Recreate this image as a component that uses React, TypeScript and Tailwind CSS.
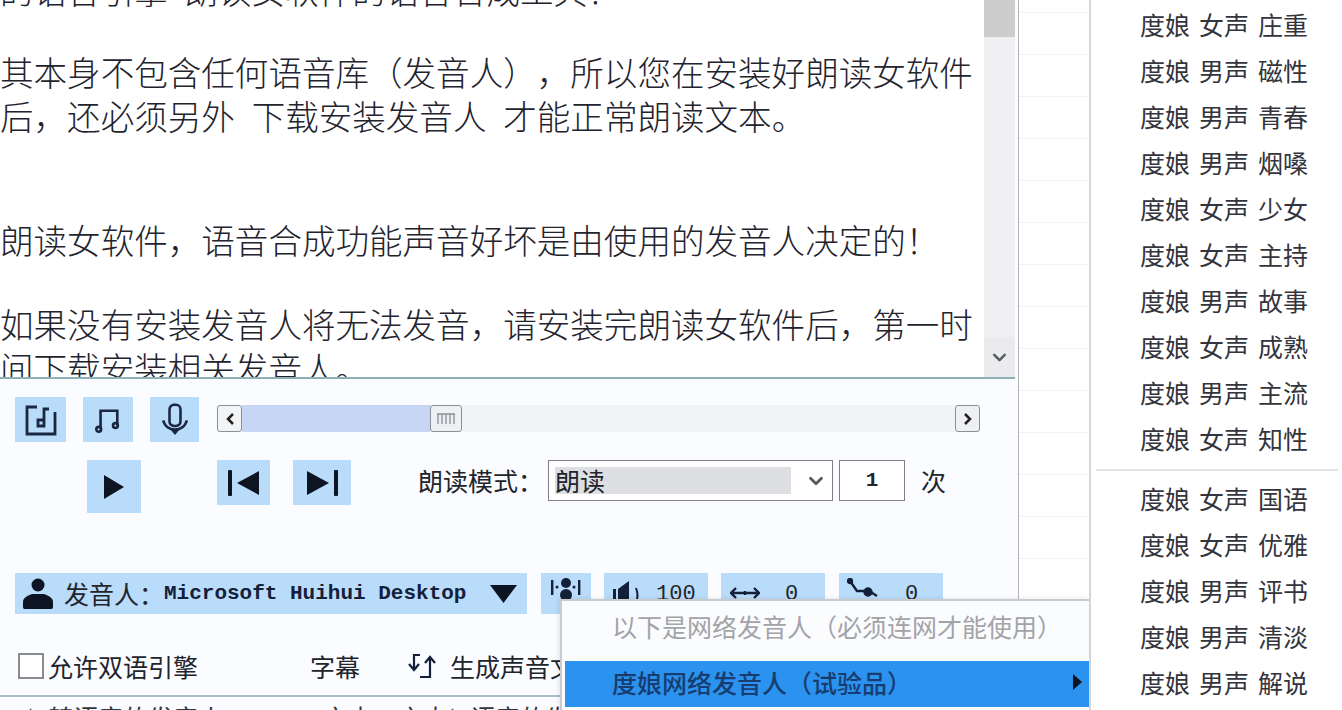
import React from 'react';
import { ChevronDown } from 'lucide-react';

const ink = '#1b2740';

const voices = [
  ['女声', '庄重'],
  ['男声', '磁性'],
  ['男声', '青春'],
  ['男声', '烟嗓'],
  ['女声', '少女'],
  ['女声', '主持'],
  ['男声', '故事'],
  ['女声', '成熟'],
  ['男声', '主流'],
  ['女声', '知性'],
];

const voices2 = [
  ['女声', '国语'],
  ['女声', '优雅'],
  ['男声', '评书'],
  ['男声', '清淡'],
  ['男声', '解说'],
];

const VoiceRow = ({ v }: { v: string[] }) => (
  <div className="h-[46px] flex items-center gap-[9px] pl-[49px] text-[25px] leading-none text-[#34343c]">
    <span>度娘</span>
    <span>{v[0]}</span>
    <span>{v[1]}</span>
  </div>
);

const Line = ({ children, className = '' }: { children: React.ReactNode; className?: string }) => (
  <p className={`h-[44px] leading-[44px] whitespace-pre [text-spacing-trim:space-all] ${className}`}>{children}</p>
);

const App = () => {
  return (
    <div className="relative w-[1342px] h-[710px] overflow-hidden flex bg-white text-[#22242c] font-['Noto_Sans_CJK_SC','Noto_Sans',sans-serif]">
      {/* main window */}
      <div className="w-[1019px] shrink-0 border-r border-[#b2b4b8] flex flex-col bg-[#fafcff]">
        <div className="w-[1015px] h-[379px] shrink-0 flex border-b-2 border-[#8db0b6]">
          <div className="w-[984px] overflow-hidden bg-white text-[33.55px] font-light text-[#23232e]">
            <Line className="-mt-[32px]">的语音引擎{'\u2002'}朗读女软件的语音合成工具！</Line>
            <Line className="mt-[38px]">其本身不包含任何语音库（发音人），所以您在安装好朗读女软件</Line>
            <Line>后，还必须另外{'\u2002'}下载安装发音人{'\u2002'}才能正常朗读文本。</Line>
            <Line className="mt-[80px]">朗读女软件，语音合成功能声音好坏是由使用的发音人决定的！</Line>
            <Line className="mt-[40px]">如果没有安装发音人将无法发音，请安装完朗读女软件后，第一时</Line>
            <Line>间下载安装相关发音人。</Line>
          </div>
          <div className="w-[31px] bg-[#f0f0f2] flex flex-col justify-between">
            <div className="h-[37px] bg-[#cdcdcd]" />
            <div className="h-[40px] flex items-center justify-center bg-[#ebebed] text-[#5a6068]">
              <ChevronDown size={21} strokeWidth={3} />
            </div>
          </div>
        </div>

        {/* row 1 */}
        <div className="mt-[18px] h-[45px] shrink-0 flex pl-[15px]">
          <div className="w-[51px] h-[45px] bg-[#b9dcfa] flex items-center justify-center">
            <svg width="32" height="32" viewBox="0 0 32 32" fill="none" stroke={ink} strokeWidth="2.8">
              <path d="M12 3H2V30H30V8" />
              <path d="M24 5H19V22H13V16H19" />
            </svg>
          </div>
          <div className="ml-[17px] w-[50px] h-[45px] bg-[#b9dcfa] flex items-center justify-center">
            <svg width="26" height="28" viewBox="0 0 28 30" fill="none" stroke={ink} strokeWidth="2.8">
              <path d="M6 25V5H24V21" />
              <circle cx="4" cy="25" r="2.6" />
              <circle cx="22" cy="21" r="2.6" />
            </svg>
          </div>
          <div className="ml-[17px] w-[49px] h-[45px] bg-[#b9dcfa] flex items-center justify-center">
            <svg width="26" height="33" viewBox="0 0 28 36" fill="none" stroke={ink} strokeWidth="2.8">
              <rect x="8" y="2" width="12" height="23" rx="5" />
              <path d="M1 19C3 26 8 29 14 29C20 29 25 26 27 19" />
              <path d="M9 29H19L14 35Z" fill={ink} stroke="none" />
            </svg>
          </div>
          {/* progress slider */}
          <div className="ml-[18px] mt-[8px] w-[763px] h-[27px] flex items-center bg-[#f1f3f6]">
            <div className="w-[25px] h-[27px] bg-[#f3f4f6] border border-[#8b8f96] rounded-[3px] flex items-center justify-center">
              <svg width="8" height="12" viewBox="0 0 8 12"><path d="M7 1 2 6l5 5" fill="none" stroke="#222" strokeWidth="2.5" /></svg>
            </div>
            <div className="w-[188px] h-[27px] bg-[#c8d6f6]" />
            <div className="w-[32px] h-[27px] bg-[#eef0f3] border border-[#8b8f96] rounded-[3px] flex items-center justify-center">
              <svg width="20" height="12" viewBox="0 0 20 12" stroke="#8a8f98" strokeWidth="1.3">
                <path d="M2 1V11M6 1V11M10 1V11M14 1V11M18 1V11M1 1H19" />
              </svg>
            </div>
            <div className="flex-1" />
            <div className="w-[25px] h-[27px] bg-[#eef0f3] border border-[#8b8f96] rounded-[3px] flex items-center justify-center">
              <svg width="8" height="12" viewBox="0 0 8 12"><path d="M1 1l5 5-5 5" fill="none" stroke="#222" strokeWidth="2.5" /></svg>
            </div>
          </div>
        </div>

        {/* row 2 */}
        <div className="mt-[18px] h-[53px] shrink-0 flex items-start pl-[87px]">
          <div className="w-[54px] h-[53px] bg-[#b9dcfa] flex items-center justify-center">
            <svg width="20" height="24" viewBox="0 0 20 24"><path d="M0 0 20 12 0 24Z" fill="#0d1422" /></svg>
          </div>
          <div className="ml-[76px] w-[53px] h-[45px] bg-[#b9dcfa] flex items-center justify-center">
            <svg width="32" height="26" viewBox="0 0 32 26" fill="#0d1422">
              <rect x="0" y="0" width="4" height="26" rx="1" />
              <path d="M31 1V25L9 13Z" />
            </svg>
          </div>
          <div className="ml-[23px] w-[58px] h-[45px] bg-[#b9dcfa] flex items-center justify-center">
            <svg width="32" height="26" viewBox="0 0 32 26" fill="#0d1422">
              <path d="M1 1V25L23 13Z" />
              <rect x="28" y="0" width="4" height="26" rx="1" />
            </svg>
          </div>
          <div className="ml-[67px] h-[42px] w-[130px] flex items-center text-[25px]">朗读模式：</div>
          <div className="h-[41px] w-[285px] border border-[#7e8084] bg-white flex items-center pl-[6px]">
            <div className="w-[236px] h-[27px] bg-[#dedfe2] flex items-center text-[25px] leading-none">朗读</div>
            <ChevronDown size={22} strokeWidth={3} className="ml-[14px] text-[#555a62]" />
          </div>
          <div className="ml-[6px] h-[41px] w-[66px] border border-[#7e8084] bg-white flex items-center justify-center font-['Liberation_Mono',monospace] font-bold text-[21px]">1</div>
          <div className="ml-[16px] h-[41px] flex items-center text-[25px]">次</div>
        </div>

        {/* row 3 */}
        <div className="mt-[60px] h-[41px] shrink-0 flex pl-[15px]">
          <div className="w-[512px] h-[41px] bg-[#b9dcfa] flex items-center pl-[8px]">
            <svg width="30" height="32" viewBox="0 0 30 32" fill="#0d1422">
              <circle cx="15" cy="7" r="6.5" />
              <path d="M2 31C0 31 0 30 0 28V24C0 20 4 18 9 16H21C26 18 30 20 30 24V28C30 30 30 31 28 31Z" />
            </svg>
            <span className="ml-[11px] w-[100px] shrink-0 whitespace-nowrap text-[25px] leading-none">发音人：</span>
            <span className="font-['Liberation_Mono',monospace] font-bold text-[21px] leading-none text-[#14203a] whitespace-pre">Microsoft Huihui Desktop</span>
            <svg className="ml-[24px]" width="27" height="18" viewBox="0 0 27 18"><path d="M0 0H27L13.5 18Z" fill="#0d1422" /></svg>
          </div>
          <div className="ml-[14px] w-[50px] h-[41px] bg-[#b9dcfa] flex items-start justify-center pt-[4px]">
            <svg width="32" height="24" viewBox="0 0 32 24" fill="#14203a">
              <rect x="1" y="3" width="2.4" height="15" />
              <rect x="28" y="3" width="2.4" height="15" />
              <circle cx="16" cy="6" r="5" />
              <circle cx="7" cy="10" r="1.5" />
              <circle cx="24" cy="10" r="1.5" />
              <circle cx="16" cy="18" r="6" />
            </svg>
          </div>
          <div className="ml-[13px] w-[104px] h-[41px] bg-[#b9dcfa] flex items-start pt-[7px] pl-[9px]">
            <svg width="30" height="24" viewBox="0 0 30 24" fill="#14203a">
              <rect x="0" y="9" width="3" height="15" />
              <path d="M5 9 16 1V24H5Z" />
              <path d="M23 8C25 13 25 18 23 23" fill="none" stroke="#14203a" strokeWidth="2" />
            </svg>
            <span className="ml-[13px] font-['Liberation_Mono',monospace] text-[22px] leading-[30px]">100</span>
          </div>
          <div className="ml-[13px] w-[104px] h-[41px] bg-[#b9dcfa] flex items-start pt-[7px] pl-[9px]">
            <svg className="mt-[6px]" width="30" height="14" viewBox="0 0 30 14" fill="none" stroke="#14203a" strokeWidth="2.4">
              <path d="M1 7H29M6 2 1 7l5 5M24 2l5 5-5 5M15 5V9" />
            </svg>
            <span className="ml-[25px] font-['Liberation_Mono',monospace] text-[22px] leading-[30px]">0</span>
          </div>
          <div className="ml-[14px] w-[104px] h-[41px] bg-[#b9dcfa] flex items-start pt-[5px] pl-[8px]">
            <svg width="34" height="24" viewBox="0 0 34 24" fill="none" stroke="#14203a" strokeWidth="2.4">
              <circle cx="3" cy="3" r="2" fill="#14203a" />
              <path d="M3 3 10 13H22L30 18" />
              <circle cx="21" cy="14" r="3.5" fill="#14203a" />
            </svg>
            <span className="ml-[24px] mt-[2px] font-['Liberation_Mono',monospace] text-[22px] leading-[30px]">0</span>
          </div>
        </div>

        {/* row 4 */}
        <div className="mt-[37px] h-[30px] shrink-0 flex items-center pl-[18px] text-[25px] leading-none">
          <span className="w-[26px] h-[26px] border-2 border-[#8a8c90] bg-white shrink-0" />
          <span className="ml-[4px] w-[262px]">允许双语引擎</span>
          <span className="w-[97px]">字幕</span>
          <svg width="30" height="26" viewBox="0 0 30 26" fill="none" stroke="#14203a" strokeWidth="2.2">
            <path d="M13 2H7V16M2 11l5 6 5-6" />
            <path d="M13 24H23V5M18 10l5-6 5 6" />
          </svg>
          <span className="ml-[13px] whitespace-pre">生成声音文件</span>
        </div>

        {/* cut off bottom strip */}
        <div className="mt-[14px] shrink-0 border-t-2 border-[#a6bec6] pl-[18px] pt-[2px] flex text-[25px] whitespace-pre text-[#33353c]">
          <span className="w-[305px]">＊ 转语音的发音人</span>
          <span className="w-[117px]">文本·文本</span>
          <span>＊ 语音的发音人</span>
        </div>
      </div>

      {/* grid behind the menus */}
      <div className="w-[70px] shrink-0 flex flex-col bg-white">
        <div className="h-[13px] shrink-0 border-b border-[#f2f3f5]" />
        {Array.from({ length: 14 }).map((_, i) => (
          <div key={i} className="h-[42px] shrink-0 border-b border-[#f2f3f5]" />
        ))}
      </div>

      {/* voice submenu */}
      <div className="flex-1 border-l-2 border-[#d4d6dc] bg-white pt-[1px]">
        {voices.map((v, i) => (
          <VoiceRow key={i} v={v} />
        ))}
        <div className="h-[14px] pt-[8px] pl-[5px] pr-[4px]">
          <div className="h-[2px] w-full bg-[#e2e3e6]" />
        </div>
        {voices2.map((v, i) => (
          <VoiceRow key={i} v={v} />
        ))}
      </div>

      {/* popup menu */}
      <div className="absolute left-[560px] top-[599px] w-[529px] h-[111px] bg-[#fbfcfe] border-t-2 border-l-2 border-[#c9cacd] shadow-[-2px_-1px_4px_rgba(0,0,0,0.08)]">
        <div className="h-[50px] flex items-center pl-[50px] text-[25px] leading-none text-[#a3a3a8] whitespace-pre [text-spacing-trim:space-all]">以下是网络发音人（必须连网才能使用）</div>
        <div className="ml-[3px] mt-[10px] h-[46px] bg-[#2b92ef] flex items-center pl-[47px] pb-[4px] text-[25px] leading-none font-medium text-[#173d70] whitespace-pre [text-spacing-trim:space-all]">
          度娘网络发音人（试验品）
          <svg className="absolute left-[510px]" width="11" height="16" viewBox="0 0 11 16"><path d="M1 0 10 8 1 16Z" fill="#0d1422" /></svg>
        </div>
      </div>
    </div>
  );
};

export default App;
